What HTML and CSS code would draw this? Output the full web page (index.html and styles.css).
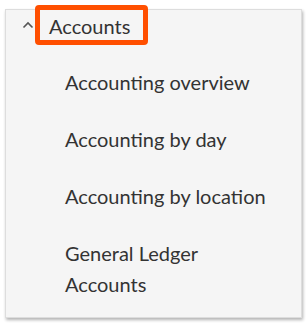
FILE: index.html
```html
<!DOCTYPE html>
<html>
<head>
<meta charset="utf-8">
<link rel="stylesheet" href="styles.css">
</head>
<body>
<div class="panel">
  <div class="header">
    <svg class="chev" width="12" height="8" viewBox="0 0 12 8"><path d="M1.5 6.5 L6 2 L10.5 6.5" fill="none" stroke="#555" stroke-width="1.6"/></svg>
    <span class="title">Accounts</span>
  </div>
  <ul class="items">
    <li>Accounting overview</li>
    <li>Accounting by day</li>
    <li>Accounting by location</li>
    <li class="wrap">General Ledger<br>Accounts</li>
  </ul>
</div>
<div class="highlight"></div>
</body>
</html>
```
FILE: styles.css
```css
html, body { margin: 0; padding: 0; background: #fff; }
body {
  width: 308px; height: 327px; position: relative; overflow: hidden;
  font-family: Lato, "Open Sans", "Liberation Sans", sans-serif; color: #333;
}
.panel {
  margin: 9px 0 0 5px;
  width: 295px; height: 307px;
  background: #f5f5f5;
  border: 1px solid #ddd;
  box-shadow: 1px 2px 3px rgba(0,0,0,0.3);
}
.header {
  display: flex; align-items: center;
  height: 32px; padding-left: 16px;
}
.chev { margin-right: 15px; margin-top: -2px; }
.title { font-size: 20px; }
.items { list-style: none; margin: -1px 0 0 0; padding: 0 0 0 59px; }
.items li { font-size: 20px; line-height: 31px; margin-top: 26px; }
.highlight {
  position: absolute; left: 35px; top: 5px; width: 103px; height: 30px;
  border: 5px solid #ff4f00; border-radius: 4px;
}
```
